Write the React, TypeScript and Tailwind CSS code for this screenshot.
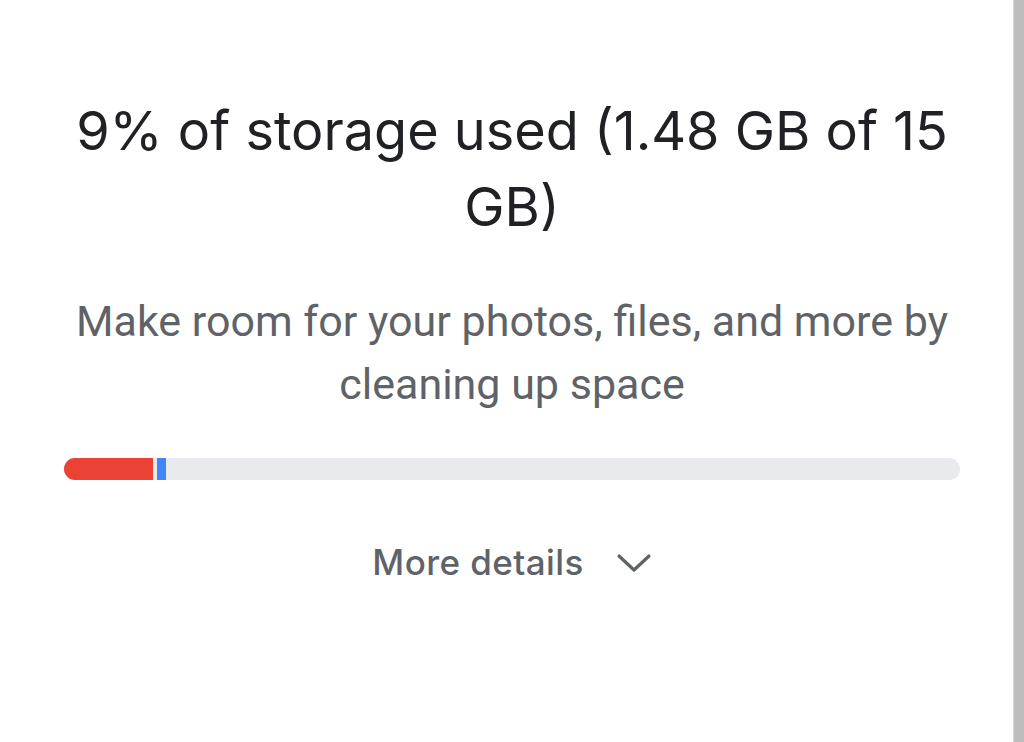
import React from 'react';

const StorageCard = () => {
    return (
        <div className="flex h-[742px] w-full bg-white">
            <div className="flex-1 flex flex-col items-center pl-[64px] pr-[53px] pt-[93px]">
                {/* Headline */}
                <h1
                    className="text-center text-[54px] leading-[76px] text-[#202124]"
                    style={{ fontFamily: 'Inter, "Noto Sans", sans-serif' }}
                >
                    9% of storage used (1.48 GB of 15 GB)
                </h1>

                <p
                    className="mt-[45px] text-center text-[43px] leading-[63px] text-[#5f6368]"
                    style={{ fontFamily: 'Roboto, "Liberation Sans", sans-serif' }}
                >
                    Make room for your photos, files, and more by cleaning up space
                </p>

                {/* Usage bar */}
                <div className="mt-[42px] flex h-[22px] w-full overflow-hidden rounded-full bg-[#e8eaed]">
                    <div className="w-[89px] bg-[#ea4335]" />
                    <div className="ml-[4px] w-[9px] bg-[#4285f4]" />
                </div>

                {/* More details */}
                <button
                    className="mt-[56px] flex items-center gap-[32px] text-[35px] font-medium text-[#5f6368] tracking-[0.4px]"
                    style={{ fontFamily: 'Inter, "Noto Sans", sans-serif' }}
                >
                    <span>More details</span>
                    <svg width="36" height="20" viewBox="0 0 36 20" fill="none" className="mt-[2px]">
                        <path d="M3 3 L18 17 L33 3" stroke="#5f6368" strokeWidth="3.2" strokeLinecap="round" strokeLinejoin="round" />
                    </svg>
                </button>
            </div>

            {/* Scrollbar strip */}
            <div className="w-[11px] border-l border-[#d6d6d6] bg-[#bdbdbd]" />
        </div>
    );
};

export default function App() {
    return <StorageCard />;
}
